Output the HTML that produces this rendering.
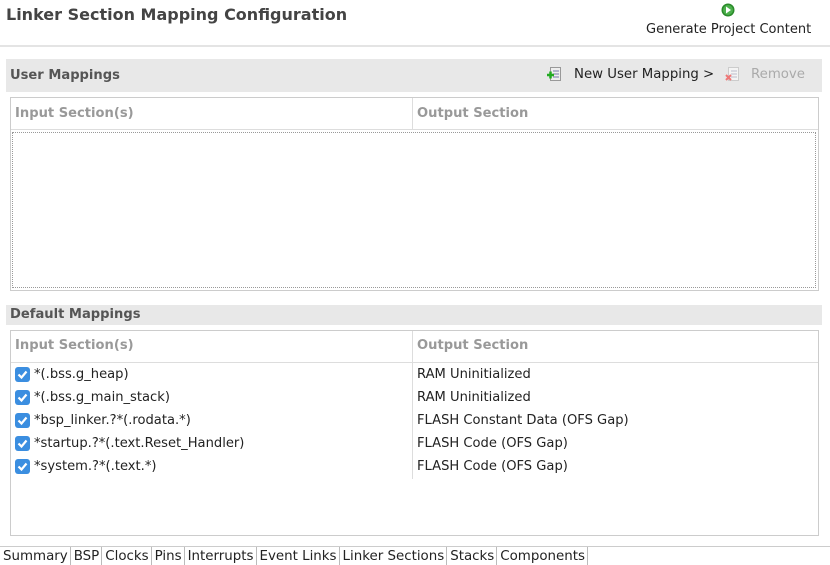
<!DOCTYPE html><html><head><style>
body{margin:0;width:830px;height:564px;background:#fff;font-family:"DejaVu Sans","Liberation Sans",sans-serif;font-size:13.1px;color:#222;position:relative;overflow:hidden}
.a{position:absolute;white-space:nowrap}
.hd{font-weight:bold;color:#999}
.cb{position:absolute;width:15px;height:15px;background:#3b8ee0;border-radius:3px}
.cb svg{position:absolute;left:2px;top:2px}
.tab{display:inline-block;padding:1px 2px 0 3px;border-right:1px solid #bbb;height:17px;line-height:17px;font-size:13.4px}
</style></head><body>
<div class="a" style="left:6px;top:5px;font-size:16px;font-weight:bold;color:#444">Linker Section Mapping Configuration</div>
<svg class="a" style="left:721px;top:3px" width="14" height="14"><circle cx="7" cy="7" r="6.5" fill="#2a8a2a"/><circle cx="7" cy="7" r="5" fill="#4cb04c"/><path d="M5 3.5L10 7L5 10.5Z" fill="#fff"/></svg>
<div class="a" style="left:646px;top:22px;font-size:13px">Generate Project Content</div>
<div class="a" style="left:0;top:45px;width:830px;height:2px;background:#e4e4e4"></div>
<div class="a" style="left:6px;top:59px;width:816px;height:33px;background:#e8e8e8"></div>
<div class="a" style="left:10px;top:68px;font-weight:bold;color:#555">User Mappings</div>
<svg class="a" style="left:546px;top:66px" width="16" height="16"><rect x="4.5" y="1.5" width="10" height="13" fill="#eee" stroke="#999"/><path d="M7 5h6M7 8h6M7 11h6" stroke="#77a"/><path d="M1 9h7M4.5 5.5v7" stroke="#2a2" stroke-width="2.5"/></svg>
<div class="a" style="left:574px;top:67px;font-size:13.3px">New User Mapping &gt;</div>
<svg class="a" style="left:724px;top:66px" width="16" height="16"><rect x="4.5" y="1.5" width="10" height="13" fill="#f4f4f4" stroke="#ccc"/><path d="M7 5h6M7 8h6M7 11h6" stroke="#bbc"/><path d="M2 9l5 5M7 9l-5 5" stroke="#e77" stroke-width="2"/></svg>
<div class="a" style="left:751px;top:67px;font-size:13.3px;color:#aaa">Remove</div>
<div class="a" style="left:10px;top:97px;width:807px;height:192px;border:1px solid #ccc"></div>
<div class="a" style="left:11px;top:129px;width:807px;height:1px;background:#ddd"></div>
<div class="a" style="left:412px;top:98px;width:1px;height:31px;background:#ddd"></div>
<div class="a hd" style="left:15px;top:106px">Input Section(s)</div>
<div class="a hd" style="left:417px;top:106px">Output Section</div>
<div class="a" style="left:12px;top:132px;width:802px;height:154px;border:1px dotted #999"></div>
<div class="a" style="left:6px;top:305px;width:816px;height:20px;background:#e8e8e8"></div>
<div class="a" style="left:10px;top:307px;font-weight:bold;color:#555">Default Mappings</div>
<div class="a" style="left:10px;top:330px;width:807px;height:204px;border:1px solid #ccc"></div>
<div class="a" style="left:11px;top:362px;width:807px;height:1px;background:#ddd"></div>
<div class="a" style="left:412px;top:331px;width:1px;height:148px;background:#ddd"></div>
<div class="a hd" style="left:15px;top:338px">Input Section(s)</div>
<div class="a hd" style="left:417px;top:338px">Output Section</div>
<div class="cb" style="left:15px;top:367px"><svg width="11" height="11"><path d="M1.5 5.5L4.5 8.5L9.5 2.5" stroke="#fff" stroke-width="2.2" fill="none"/></svg></div>
<div class="a" style="left:34px;top:367px">*(.bss.g_heap)</div><div class="a" style="left:417px;top:367px">RAM Uninitialized</div>
<div class="cb" style="left:15px;top:390px"><svg width="11" height="11"><path d="M1.5 5.5L4.5 8.5L9.5 2.5" stroke="#fff" stroke-width="2.2" fill="none"/></svg></div>
<div class="a" style="left:34px;top:390px">*(.bss.g_main_stack)</div><div class="a" style="left:417px;top:390px">RAM Uninitialized</div>
<div class="cb" style="left:15px;top:413px"><svg width="11" height="11"><path d="M1.5 5.5L4.5 8.5L9.5 2.5" stroke="#fff" stroke-width="2.2" fill="none"/></svg></div>
<div class="a" style="left:34px;top:413px">*bsp_linker.?*(.rodata.*)</div><div class="a" style="left:417px;top:413px">FLASH Constant Data (OFS Gap)</div>
<div class="cb" style="left:15px;top:436px"><svg width="11" height="11"><path d="M1.5 5.5L4.5 8.5L9.5 2.5" stroke="#fff" stroke-width="2.2" fill="none"/></svg></div>
<div class="a" style="left:34px;top:436px">*startup.?*(.text.Reset_Handler)</div><div class="a" style="left:417px;top:436px">FLASH Code (OFS Gap)</div>
<div class="cb" style="left:15px;top:459px"><svg width="11" height="11"><path d="M1.5 5.5L4.5 8.5L9.5 2.5" stroke="#fff" stroke-width="2.2" fill="none"/></svg></div>
<div class="a" style="left:34px;top:459px">*system.?*(.text.*)</div><div class="a" style="left:417px;top:459px">FLASH Code (OFS Gap)</div>
<div class="a" style="left:0;top:546px;width:830px;height:18px;border-top:1px solid #ccc;background:#fff">
<span class="tab">Summary</span><span class="tab">BSP</span><span class="tab">Clocks</span><span class="tab">Pins</span><span class="tab">Interrupts</span><span class="tab">Event Links</span><span class="tab">Linker Sections</span><span class="tab">Stacks</span><span class="tab">Components</span></div>
</body></html>
